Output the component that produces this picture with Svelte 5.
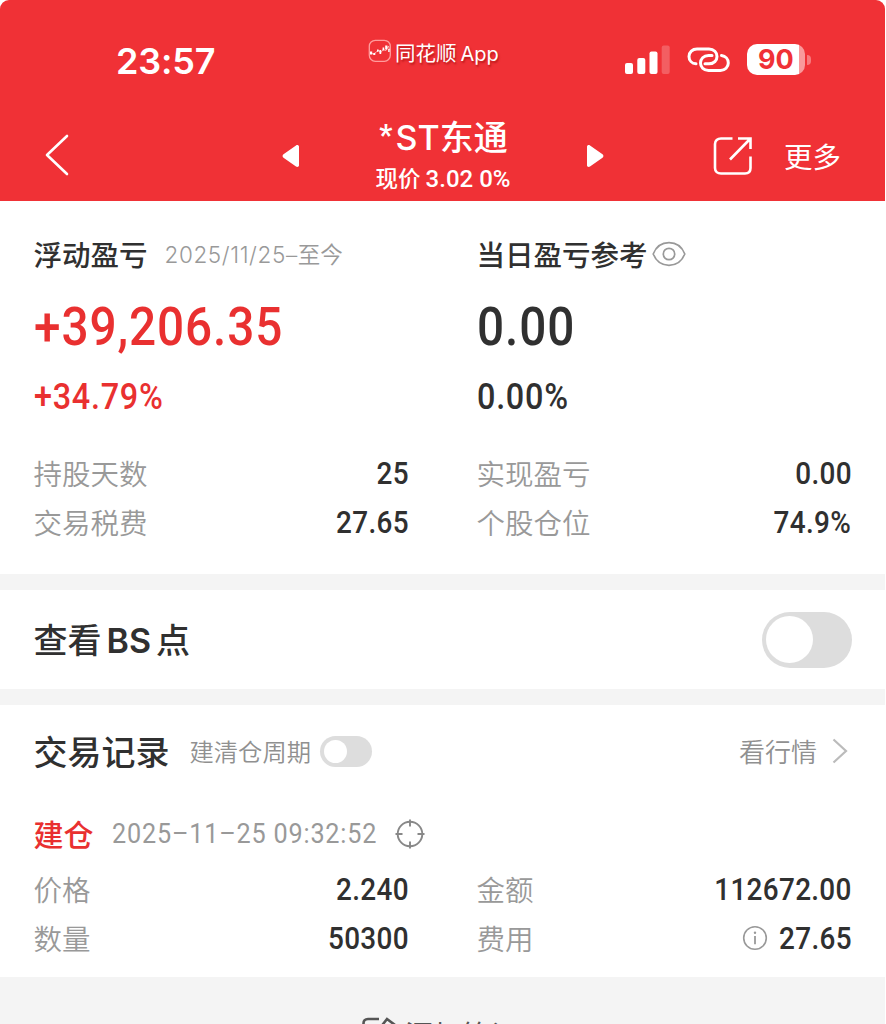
<script>
  const summary = [
    { label: '持股天数', value: '25' },
    { label: '实现盈亏', value: '0.00' },
    { label: '交易税费', value: '27.65' },
    { label: '个股仓位', value: '74.9%' }
  ];
  const trade = [
    { label: '价格', value: '2.240' },
    { label: '金额', value: '112672.00' },
    { label: '数量', value: '50300' },
    { label: '费用', value: '27.65', info: true }
  ];
</script>

{#snippet cells(items)}
  <div class="cells">
    {#each items as item}
      <div class="cell">
        <span class="label">{item.label}</span>
        <span class="value">
          {#if item.info}
            <svg class="info" width="26" height="26" viewBox="0 0 26 26" fill="none" stroke="#999" stroke-width="1.6">
              <circle cx="13" cy="13" r="11.3" />
              <path d="M13 11v8.3" stroke-width="1.8" />
              <circle cx="13" cy="7.7" r="1.2" fill="#999" stroke="none" />
            </svg>
          {/if}
          <span class="num">{item.value}</span>
        </span>
      </div>
    {/each}
  </div>
{/snippet}

<div class="page">
  <header>
    <div class="status">
      <span class="time">23:57</span>
      <div class="brand">
        <svg width="24" height="24" viewBox="0 0 24 24" fill="none">
          <rect x="1.3" y="1.3" width="21" height="21" rx="6" stroke="#ff9c9c" stroke-width="1.3" />
          <path d="M2.500 14l3 1 3-2 2-2 2 3 3-4 2 2 3-5 1 4" stroke="#ffc9c9" stroke-width=".8" />
          <path d="M2 12.500h2.200v3H2zM5.300 14h2v2h-2zM9 10.500h1.600v2.300H9zM11.500 11h1.700v4h-1.700zM14.600 8.500h1.600v3h-1.600zM17.200 6.500h2.200v4h-2.200zM20.200 10h1.400v3h-1.400z" fill="#fff" />
        </svg>
        <span>同花顺<i>App</i></span>
      </div>
      <svg class="signal" width="46" height="30" viewBox="0 0 46 30" fill="#fff">
        <rect x="0" y="18" width="8" height="11" rx="2" />
        <rect x="12.300" y="13" width="8" height="16" rx="2" />
        <rect x="24.500" y="6.500" width="8" height="22.500" rx="2" />
        <rect x="36.700" y="0.500" width="8" height="28.500" rx="2" opacity=".22" />
      </svg>
      <svg class="link" width="44" height="28" viewBox="0 0 44 28" fill="none" stroke="#fff" stroke-width="3" stroke-linecap="round">
        <path d="M9 17.800C5 17.500 2 14.500 2 10.400 2 6 5.500 3 10 3H22c5 0 8 3.500 8 7.400s-3 7.400-8 7.400H18" />
        <path d="M34.500 9.500c4 .5 6.800 3.500 6.800 7.500s-3.300 7.500-7.800 7.500h-12c-5 0-8-3.500-8-7.500s3-7.500 8-7.500H25" />
      </svg>
      <div class="battery"><div class="cellbody"><span>90</span></div><div class="tip"></div></div>
    </div>
    <nav>
      <svg class="back" width="26" height="44" viewBox="0 0 26 44" fill="none" stroke="#fff" stroke-width="2.600" stroke-linecap="round" stroke-linejoin="round">
        <path d="M23 3L3 22l20 19" />
      </svg>
      <svg class="prev" width="18" height="24" viewBox="0 0 18 24" fill="#fff">
        <path d="M17 2.500v19c0 1.300-1.800 2-3 1L1.500 13.800c-1.200-.9-1.200-2.700 0-3.600L14 1.500c1.200-1 3-.3 3 1z" />
      </svg>
      <div class="title">
        <h1><i>*</i>ST东通</h1>
        <p>现价 <b>3.02 0%</b></p>
      </div>
      <svg class="next" width="18" height="24" viewBox="0 0 18 24" fill="#fff">
        <path d="M1 2.500v19c0 1.300 1.800 2 3 1l12.500-8.700c1.200-.9 1.200-2.700 0-3.600L4 1.500c-1.200-1-3-.3-3 1z" />
      </svg>
      <svg class="share" width="40" height="40" viewBox="0 0 40 40" fill="none" stroke="#fff" stroke-width="2.600">
        <path d="M19.500 2.500H8C4.500 2.500 2 4.500 2 8v24c0 3.500 2.500 5.500 6 5.500h24c3.500 0 5.500-2 5.500-5.500V20.500" />
        <path d="M25 2.500h12.500V13M37 3L17 23.500" />
      </svg>
      <span class="more">更多</span>
    </nav>
  </header>

  <section class="overview">
    <div class="pair">
      <div>
        <div class="head"><strong>浮动盈亏</strong><span class="range">2025/11/25–<i>至今</i></span></div>
        <div class="big red">+39,206.35</div>
        <div class="pct red">+34.79%</div>
      </div>
      <div>
        <div class="head">
          <strong>当日盈亏参考</strong>
          <svg class="eye" width="34" height="26" viewBox="0 0 34 26" fill="none" stroke="#999" stroke-width="1.700">
            <path d="M1.200 13C4 6 10 1.700 17 1.700S30 6 32.800 13C30 20 24 24.300 17 24.300S4 20 1.200 13z" />
            <circle cx="17" cy="13" r="5.700" />
          </svg>
        </div>
        <div class="big">0.00</div>
        <div class="pct">0.00%</div>
      </div>
    </div>
    {@render cells(summary)}
  </section>

  <section class="bs">
    <h2>查看<i>BS</i>点</h2>
    <div class="switch large"><span></span></div>
  </section>

  <section class="records">
    <div class="rhead">
      <h2>交易记录</h2>
      <span class="cycle">建清仓周期</span>
      <div class="switch small"><span></span></div>
      <span class="quote">看行情</span>
      <svg width="16" height="26" viewBox="0 0 16 26" fill="none" stroke="#bbb" stroke-width="2.200"><path d="M1.500 1.500L14 13 1.500 24.500" /></svg>
    </div>
    <div class="entry">
      <strong>建仓</strong>
      <time>2025–11–25 09:32:52</time>
      <svg width="30" height="30" viewBox="0 0 30 30" fill="none" stroke="#888" stroke-width="1.900">
        <circle cx="15" cy="15" r="12.300" />
        <path d="M15 .5v7M15 22.500v7M.5 15h7M22.500 15h7" />
      </svg>
    </div>
    {@render cells(trade)}
  </section>

  <footer>
    <svg width="38" height="30" viewBox="0 0 38 30" fill="none" stroke="#555" stroke-width="2.600">
      <path d="M18 2H7C4 2 2.500 3.500 2.500 6.500V24c0 3 1.500 4.500 4.500 4.500h20" />
      <path d="M12 20L26 2l8 6-14 15h-8z" />
    </svg>
    <span>添加笔记</span>
  </footer>
</div>

<style>
  :global(body) { background: #fff; overflow: hidden; }
  .page {
    width: 885px; height: 1024px; overflow: hidden; background: #f4f4f4;
    border-radius: 9px 9px 0 0;
    font-family: "Noto Sans CJK SC", sans-serif; color: #303030;
    display: flex; flex-direction: column;
  }
  * { box-sizing: border-box; margin: 0; }
  svg { flex: none; display: block; }
  i { font-style: normal; }
  header { height: 201px; flex: none; background: #f03136; color: #fff; }
  .status { height: 110px; display: flex; align-items: flex-start; }
  .time { width: 251px; margin-left: 116px; padding-top: 39px; font: 600 36px/44px Inter, sans-serif; letter-spacing: -.2px; }
  .brand { width: 258px; padding: 39px 0 0 1px; display: flex; gap: 3px; font-size: 20.500px; line-height: 26px; text-shadow: 1px 2px 2px #8008; }
  .brand i { font-family: Inter, sans-serif; font-size: 20px; margin-left: 4px; }
  .signal { margin-top: 45px; }
  .link { margin: 46px 0 0 16px; }
  .battery { display: flex; align-items: center; margin: 44px 0 0 16px; gap: 2px; }
  .cellbody { width: 58px; height: 31px; border-radius: 10px; background: linear-gradient(90deg, #fff 52.500px, #f9999b 52.500px); color: #f03136; font: 700 27px/31px Inter, sans-serif; padding-left: 11px; }
  .tip { width: 4px; height: 10px; border-radius: 0 5px 5px 0; background: #f7797c; }
  nav { height: 91px; display: flex; align-items: flex-start; }
  .back { margin: 23px 0 0 44px; }
  .prev { margin: 34px 0 0 212px; }
  .title { width: 286px; padding-top: 5px; text-align: center; white-space: nowrap; }
  h1 { font: 500 34px/46px Inter, "Noto Sans CJK SC", sans-serif; padding-left: 1px; }
  h1 i { font: 700 29px/36px Roboto, sans-serif; margin-right: 3px; vertical-align: 5px; }
  .title p { font-size: 22.500px; line-height: 34px; font-weight: 500; margin-top: -1px; }
  .title b { font: 500 24px/34px Roboto, sans-serif; }
  .next { margin: 34px 0 0 0; }
  .share { margin: 26px 0 0 109px; }
  .more { margin-left: 31px; font-size: 28.500px; line-height: 92px; }

  section { background: #fff; flex: none; padding: 0 33px 0 33.500px; }
  .overview { height: 373px; }
  .pair { display: grid; grid-template-columns: 443px 1fr; height: 247px; padding-top: 31px; }
  .head { display: flex; align-items: center; height: 44px; }
  .head strong { font-weight: 500; font-size: 28.500px; line-height: 44px; }
  .range { margin-left: 17px; font: 350 22.500px/44px Inter, sans-serif; color: #999; letter-spacing: .6px; }
  .range i { font-family: "Noto Sans CJK SC", sans-serif; font-weight: 350; letter-spacing: 0; }
  .eye { margin-left: 4px; }
  .big, .pct { transform: scaleX(.9); transform-origin: left; }
  .big { font: 500 53px/70px Roboto, sans-serif; margin-top: 16px; letter-spacing: 1px; }
  .pct { font: 500 36px/48px Roboto, sans-serif; margin-top: 11px; letter-spacing: .8px; }
  .red { color: #e93030; }
  .cells { display: grid; grid-template-columns: 375.500px 375px; column-gap: 67.500px; grid-auto-rows: 49px; }
  .cell { display: flex; justify-content: space-between; align-items: center; }
  .label { font-size: 28.500px; line-height: 49px; color: #999; font-weight: 350; }
  .value { display: flex; align-items: center; gap: 3px; }
  .num { font: 500 31px/49px Roboto, sans-serif; padding-top: 1px; letter-spacing: .35px; transform: scaleX(.9); transform-origin: right; }

  .bs { height: 99px; margin-top: 16px; display: flex; justify-content: space-between; align-items: center; }
  h2 { font-weight: 500; font-size: 34px; line-height: 50px; white-space: nowrap; }
  h2 i { font-family: Inter, sans-serif; font-weight: 600; margin: 0 5px; }
  .switch { background: #ddd; flex: none; display: flex; align-items: center; }
  .switch span { background: #fff; border-radius: 50%; }
  .large { width: 90px; height: 56px; border-radius: 28px; padding-left: 4px; }
  .large span { width: 47px; height: 47px; }
  .small { width: 52px; height: 31px; border-radius: 16px; padding-left: 4px; }
  .small span { width: 23px; height: 23px; }

  .records { margin-top: 16px; height: 272px; }
  .rhead { display: flex; align-items: center; height: 92px; }
  .cycle { font-size: 24.300px; font-weight: 350; color: #909090; margin: -2px 9px 0 20px; }
  .quote { font-size: 26px; font-weight: 350; color: #909090; margin: -2px 15px 0 auto; }
  .rhead svg { margin-right: 4px; }
  .entry { display: flex; align-items: center; height: 66px; margin-top: 4px; margin-bottom: -3px; }
  .entry strong { color: #e93030; font-weight: 500; font-size: 30px; margin-top: -3px; }
  time { font: 400 28px/60px Roboto, sans-serif; letter-spacing: .9px; color: #999; margin: 0 -11px 0 18px; transform: scaleX(.9); transform-origin: left; }
  footer { display: flex; padding: 40px 0 0 361px; gap: 6px; color: #555; font-size: 28.500px; line-height: 34px; }
</style>
